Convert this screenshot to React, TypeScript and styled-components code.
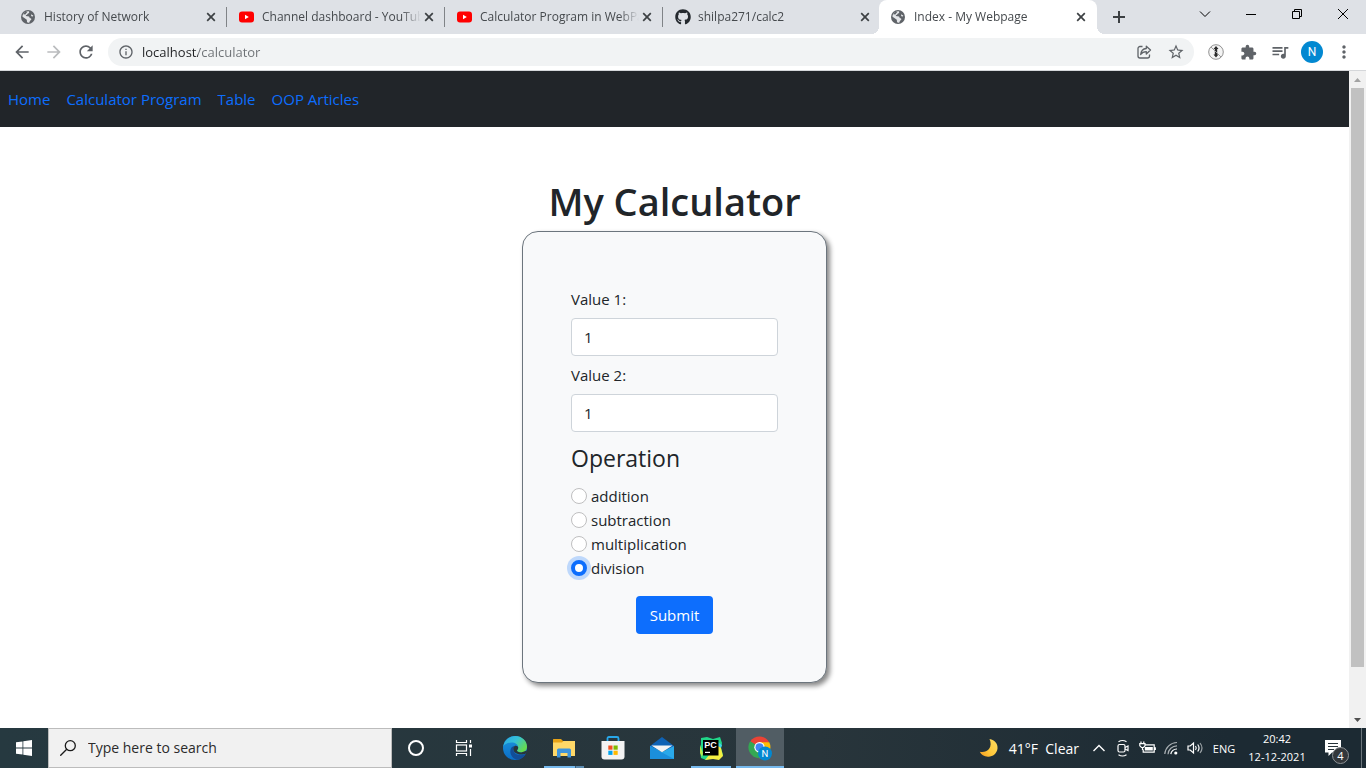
import React from "react";
import styled, { createGlobalStyle, css } from "styled-components";
import {
  MdArrowBack,
  MdArrowForward,
  MdRefresh,
  MdInfoOutline,
  MdStarBorder,
  MdExtension,
  MdQueueMusic,
  MdMoreVert,
} from "react-icons/md";
import { FaGithub } from "react-icons/fa";

const GlobalStyle = createGlobalStyle`
  *, *::before, *::after { box-sizing: border-box; }
  body {
    margin: 0;
    overflow: hidden;
    font-family: "Segoe UI", "Open Sans", "Noto Sans", sans-serif;
    background: #fff;
  }
  button { font: inherit; }
`;

const Desktop = styled.div`
  display: flex;
  flex-direction: column;
  height: 100vh;
`;

/* ---------- browser chrome ---------- */

const TabStrip = styled.header`
  display: flex;
  flex: none;
  height: 34px;
  padding-left: 9px;
  background: #dee1e6;
`;

const Tab = styled.div<{ $active?: boolean; $divider?: boolean }>`
  position: relative;
  display: flex;
  align-items: center;
  flex: 0 1 218px;
  min-width: 0;
  padding: 0 8px 0 12px;
  color: #45494d;
  ${(p) =>
    p.$divider &&
    css`
      &::after {
        content: "";
        position: absolute;
        right: 0;
        top: 7px;
        width: 1px;
        height: 20px;
        background: #808387;
      }
    `}
  ${(p) =>
    p.$active &&
    css`
      margin-left: -2px;
      background: #fff;
      border-radius: 8px 8px 0 0;
      &::before,
      &::after {
        content: "";
        position: absolute;
        bottom: 0;
        width: 8px;
        height: 8px;
      }
      &::before {
        left: -8px;
        background: radial-gradient(circle at 0 0, transparent 8px, #fff 8px);
      }
      &::after {
        right: -8px;
        background: radial-gradient(circle at 100% 0, transparent 8px, #fff 8px);
      }
    `}
`;

const Favicon = styled.span`
  display: flex;
  flex: none;
  width: 16px;
  height: 16px;
  margin-right: 7px;
`;

const TabTitle = styled.span`
  flex: 1;
  min-width: 0;
  overflow: hidden;
  white-space: nowrap;
  font-size: 12px;
  line-height: 16px;
  mask-image: linear-gradient(to right, #000 calc(100% - 20px), transparent);
`;

const PlainButton = styled.button`
  display: flex;
  align-items: center;
  justify-content: center;
  flex: none;
  padding: 0;
  border: 0;
  background: none;
  color: inherit;
`;

const CloseTab = styled(PlainButton)`
  width: 16px;
  height: 16px;
`;

const NewTab = styled(PlainButton)`
  width: 28px;
  margin-left: 8px;
`;

const WindowButtons = styled.div`
  display: flex;
  margin-left: auto;
`;

const WindowButton = styled(PlainButton)`
  width: 46px;
  height: 28px;
  color: #000;
`;

const Toolbar = styled.div`
  display: flex;
  align-items: center;
  flex: none;
  height: 37px;
  padding: 0 6px;
  border-bottom: 1px solid #d5d7da;
  background: #fff;
`;

const ToolButton = styled(PlainButton)<{ $dim?: boolean }>`
  width: 32px;
  height: 28px;
  color: ${(p) => (p.$dim ? "#babcbe" : "#5f6368")};
`;

const AddressBar = styled.div`
  display: flex;
  align-items: center;
  flex: 1;
  height: 28px;
  margin: 0 6px;
  padding: 0 2px 0 10px;
  border-radius: 14px;
  background: #f1f3f4;
  color: #5f6368;
`;

const AddressInput = styled.input`
  flex: 1;
  min-width: 0;
  padding: 0;
  margin-left: 8px;
  border: 0;
  outline: 0;
  font: 13px/20px "Segoe UI", "Open Sans", "Noto Sans", sans-serif;
  color: #5f6368;
  background: linear-gradient(to right, #202124 56px, #6d7175 56px);
  background-clip: text;
  -webkit-text-fill-color: transparent;
`;

const Avatar = styled.span`
  display: flex;
  align-items: center;
  justify-content: center;
  width: 22px;
  height: 22px;
  border-radius: 50%;
  background: #0288d1;
  color: #fff;
  font: 12px/16px Roboto, sans-serif;
`;

/* ---------- web page ---------- */

const Viewport = styled.div`
  display: flex;
  flex: 1;
  min-height: 0;
`;

const Page = styled.div`
  flex: 1;
  min-width: 0;
  overflow: hidden;
  color: #212529;
  font-size: 15px;
  line-height: 24px;
`;

const NavBar = styled.nav`
  display: flex;
  align-items: center;
  gap: 16px;
  height: 56px;
  padding: 0 8px;
  background: #212529;
`;

const NavLink = styled.a`
  color: #0d6efd;
  text-decoration: none;
`;

const Main = styled.main`
  display: flex;
  flex-direction: column;
  align-items: center;
  padding: 48px 16px;
`;

const Title = styled.h1`
  margin: 0;
  padding-top: 2px;
  font-size: 38px;
  font-weight: 600;
  line-height: 48px;
`;

const Card = styled.form`
  display: flex;
  flex-direction: column;
  width: 100%;
  max-width: 305px;
  margin-top: 6px;
  padding: 48px;
  border: 1px solid #6c757d;
  border-radius: 16px;
  background: #f8f9fa;
  box-shadow: 3px 3px 5px #888;
`;

const FieldLabel = styled.label`
  margin: 7px 0;
`;

const TextField = styled.input`
  width: 100%;
  height: 38px;
  padding: 6px 12px;
  border: 1px solid #ced4da;
  border-radius: 4px;
  background: #fff;
  color: #212529;
  font: inherit;
`;

const Operations = styled.fieldset`
  margin: 8px 0 0;
  padding: 0;
  border: 0;
`;

const Legend = styled.legend`
  margin: 0 0 8px;
  padding: 0;
  font-size: 23px;
  line-height: 36px;
`;

const Option = styled.label`
  display: flex;
  align-items: center;
  gap: 4px;
  height: 24px;
`;

const Radio = styled.input`
  appearance: none;
  flex: none;
  width: 16px;
  height: 16px;
  margin: 0;
  border: 1px solid #bfbfc0;
  border-radius: 50%;
  background: #fff;
  outline: 0;
  &:checked {
    border: 4px solid #0d6efd;
    box-shadow: 0 0 0 4px #bed8fb;
  }
`;

const Submit = styled.button`
  align-self: center;
  height: 38px;
  margin-top: 16px;
  padding: 0 14px;
  border: 0;
  border-radius: 4px;
  background: #0d6efd;
  color: #fff;
`;

const ScrollTrack = styled.div`
  display: flex;
  flex-direction: column;
  flex: none;
  width: 17px;
  background: #f1f1f1;
`;

const ScrollArrow = styled(PlainButton)`
  height: 17px;
`;

const ScrollLane = styled.div`
  flex: 1;
  padding: 0 2px;
`;

const ScrollThumb = styled.div`
  height: 93%;
  background: #c1c1c1;
`;

/* ---------- taskbar ---------- */

const Taskbar = styled.footer`
  display: flex;
  flex: none;
  height: 40px;
  background: linear-gradient(to right, #263940, #28353b 60%, #1c2a33 90%);
  color: #fff;
`;

const StartButton = styled(PlainButton)`
  width: 48px;
`;

const SearchBox = styled.label`
  display: flex;
  align-items: center;
  flex: 0 1 344px;
  min-width: 0;
  padding: 0 11px;
  gap: 12px;
  border: 1px solid #bcbcbc;
  background: #f1f1f1;
  color: #1a1a1a;
`;

const SearchInput = styled.input`
  flex: 1;
  min-width: 0;
  padding: 0;
  border: 0;
  outline: 0;
  background: none;
  font: 14px/20px "Segoe UI", "Open Sans", "Noto Sans", sans-serif;
  &::placeholder {
    color: #2b2b2b;
  }
`;

const TaskButton = styled(PlainButton)<{ $open?: boolean; $stacked?: boolean; $current?: boolean }>`
  position: relative;
  width: 48px;
  background: ${(p) => (p.$current ? "#515d64" : "none")};
  ${(p) =>
    (p.$open || p.$current) &&
    css`
      &::after {
        content: "";
        position: absolute;
        bottom: 0;
        left: ${p.$current ? 0 : 4}px;
        right: ${p.$current ? 0 : 4}px;
        height: 2px;
        background: ${p.$stacked
          ? "linear-gradient(to right, #76b9ed 31px, #3f5f76 31px, #3f5f76 32px, #5b8bb0 32px)"
          : "#76b9ed"};
      }
    `}
`;

const Pinned = styled.div`
  display: flex;
  gap: 1px;
  margin-left: 3px;
`;

const Tray = styled.div`
  display: flex;
  margin-left: auto;
`;

const Weather = styled(PlainButton)`
  gap: 10px;
  margin-right: 8px;
  font-size: 14px;
  white-space: pre;
`;

const TrayIcon = styled(PlainButton)`
  width: 24px;
`;

const Language = styled(PlainButton)`
  width: 34px;
  font-size: 11px;
`;

const Clock = styled(PlainButton)`
  flex-direction: column;
  width: 72px;
  font-size: 11px;
  line-height: 18px;
`;

const Notifications = styled(PlainButton)`
  position: relative;
  width: 48px;
  padding-right: 8px;
`;

const Badge = styled.span`
  position: absolute;
  right: 12px;
  bottom: 4px;
  width: 17px;
  height: 17px;
  border: 1px solid #8d9296;
  border-radius: 50%;
  background: #33373b;
  font-size: 11px;
  line-height: 15px;
`;

const ShowDesktop = styled(PlainButton)`
  width: 5px;
  border-left: 1px solid #6b757b;
`;

/* ---------- drawings ---------- */

const Globe = () => (
  <svg width="14" height="16" viewBox="0 0 14 16">
    <circle cx="7" cy="8" r="7" fill="#5f6368" />
    <path
      d="M7.800 2.300c.8 1.200.4 2-.9 2.300-.8 1-1.200 1.500-2.200 1.700.3.900 1 1.100 2.300 1 1.200 0 1.600.8 1.600 1.700 1.200.1 2 .5 1.700 1.600-.4 1-1.500 1-1.900 2.800-.5.300-1.500.3-2 .1-.9-1-.1-2.100-.8-3.100C4.600 9.600 3 9 1.400 7.400 1.700 4.600 4.600 2 7.800 2.300z"
      fill="#e4e6e9"
    />
    <path d="M2.200 5.300C3 3.700 4.500 2.700 6.500 2.500 6 3.800 5 4.300 4.400 5.500z" fill="#5f6368" />
    <path d="M10 5.300c1 .7 1.900.6 2.300 1.500l-.7.800c-1 0-1.800-.9-1.600-2.300z" fill="#e4e6e9" />
  </svg>
);

const YouTube = () => (
  <svg width="16" height="16" viewBox="0 0 16 16">
    <rect x="0" y="2.500" width="15" height="11" rx="3" fill="#f00" />
    <path d="M6 5.800v4.400L9.800 8z" fill="#fff" />
  </svg>
);

const CloseMark = () => (
  <svg width="10" height="10" viewBox="0 0 10 10" stroke="#3c4043" strokeWidth="1.700">
    <path d="M1.200 1.200l7.600 7.600M8.800 1.200L1.200 8.800" />
  </svg>
);

const PlusMark = () => (
  <svg width="12" height="12" viewBox="0 0 12 12" stroke="#3c4043" strokeWidth="2">
    <path d="M6 0v12M0 6h12" />
  </svg>
);

const Share = () => (
  <svg width="16" height="16" viewBox="0 0 16 16" fill="none" stroke="#5f6368" strokeWidth="1.300" strokeLinejoin="round">
    <path d="M6.500 2.500H4A2 2 0 0 0 2 4.500v7.500a2 2 0 0 0 2 2h7.500a2 2 0 0 0 2-2v-1.500" />
    <path d="M10.300 2.200v2.300C7 4.800 5 7 4.700 10.500c1.300-2 3-2.900 5.600-2.900V10L14.500 6z" />
  </svg>
);

const BlockedArrow = () => (
  <svg width="18" height="18" viewBox="0 0 18 18">
    <circle cx="9" cy="9" r="7.300" fill="#f4f4f4" stroke="#929292" />
    <path d="M9 3l2.500 3h-1.300v5.500h1.300L9 14.500l-2.500-3h1.300V6H6.500z" fill="#2a2a2a" />
    <path d="M4 4l10 10" stroke="#9a9a9a" />
  </svg>
);

const WindowsLogo = () => (
  <svg width="16" height="16" viewBox="0 0 16 16" fill="#fff">
    <path d="M0 2.300l6.500-.9v6.100H0zM7.300 1.300L16 0v7.500H7.300zM0 8.400h6.500v6.100L0 13.700zM7.300 8.400H16V16l-8.700-1.300z" />
  </svg>
);

const Magnifier = () => (
  <svg width="16" height="16" viewBox="0 0 16 16" fill="none" stroke="#1a1a1a" strokeWidth="1.300">
    <circle cx="10.300" cy="5.700" r="5" />
    <path d="M6.700 9.300L.3 15.700" />
  </svg>
);

const TaskView = () => (
  <svg width="18" height="16" viewBox="0 0 18 16" fill="none" stroke="#fff" strokeWidth="1.200">
    <path d="M1.500 0v2.500h10V0M1.500 16v-2.500h10V16" />
    <rect x="1.500" y="5" width="10" height="6" />
    <path d="M15.500 0v3M15.500 9v7" />
    <path d="M14 4.500h3v3h-3z" fill="#fff" stroke="none" />
  </svg>
);

const Edge = () => (
  <svg width="24" height="24" viewBox="0 0 24 24">
    <defs>
      <linearGradient id="edgeTop" x1="0" y1="0" x2="1" y2="0.600">
        <stop offset="0" stopColor="#2aa5e4" />
        <stop offset="0.500" stopColor="#35c1d8" />
        <stop offset="1" stopColor="#66dc4e" />
      </linearGradient>
      <linearGradient id="edgeBody" x1="0" y1="0" x2="0" y2="1">
        <stop offset="0" stopColor="#1c96dd" />
        <stop offset="1" stopColor="#0b6dc6" />
      </linearGradient>
    </defs>
    <circle cx="12" cy="12" r="12" fill="url(#edgeBody)" />
    <path d="M.2 10.500C1.400 4 6.500 0 12.300 0 19 0 24 5 24 10.700c0 3.800-2.800 5.800-5.800 5.800-2.600 0-4.200-1-4.200-1.900 0-.7 1.200-1 1.200-3C15.200 8.500 12.300 6.500 8.500 6.500 4.800 6.500 1.500 8.500.2 10.500z" fill="url(#edgeTop)" />
    <path d="M8.500 11.500c-3 4.500 0 11 5.500 12.300C18 23.500 21 21 22.800 18c-5 2.500-11.500.8-12.500-3.800-.3-1.800.4-3 1.500-4-1.400 0-2.500.4-3.300 1.300z" fill="#124d97" />
    <path d="M12 9.800c-2.400 1.700-2.200 5 .3 7 3.500 2.600 8.200 1.800 10.500.6 .5-.2.600 0 .3.600l1-3.500-5.900 2c-2.600 0-4.200-1-4.200-1.900 0-.7 1.200-1 1.200-3 0-1.200-1.500-2.300-3.200-1.800z" fill="#28353b" />
  </svg>
);

const Explorer = () => (
  <svg width="22" height="20" viewBox="0 0 22 20">
    <path d="M0 1.500Q0 1 .6 1H8l2 2H21.400q.6 0 .6.600V18H0z" fill="#e8a317" />
    <path d="M0 4.500h9l1.500-1.500H22V18H0z" fill="#ffd868" />
    <path d="M4 19.500v-7.500q0-1.500 1.500-1.500h11q1.500 0 1.500 1.500v7.500h-3.500V15h-7v4.500z" fill="#3e94dc" />
  </svg>
);

const Store = () => (
  <svg width="24" height="24" viewBox="0 0 24 24">
    <path d="M6.500 6V2.500Q6.500 1 8 1h8q1.500 0 1.500 1.500V6" fill="none" stroke="#28a8ea" strokeWidth="1.800" />
    <path d="M.5 5h23v15.500q0 3-3 3h-17q-3 0-3-3z" fill="#f3f3f3" />
    <path d="M7.300 9.500h4.200v4.200H7.300z" fill="#f25022" />
    <path d="M12.500 9.500h4.200v4.200h-4.200z" fill="#7fba00" />
    <path d="M7.300 14.700h4.200v4.200H7.300z" fill="#00a4ef" />
    <path d="M12.500 14.700h4.200v4.200h-4.200z" fill="#ffb900" />
  </svg>
);

const Mail = () => (
  <svg width="24" height="22" viewBox="0 0 24 22">
    <path d="M0 9L12 0l12 9v4H0z" fill="#0f62b4" />
    <path d="M0 9l12 6 12-6v13H0z" fill="#2aa9ea" />
    <path d="M0 9l24 13H0z" fill="#1b8fdc" />
    <path d="M1.500 8.500h21L12 15.300z" fill="#f4f4f4" />
  </svg>
);

const PyCharm = () => (
  <svg width="24" height="24" viewBox="0 0 24 24">
    <path d="M2 2l6-1 6 2 7-2 2 6-1 5 2 7-4 4-6-1-7 2-5-2-1-8 1-6z" fill="#21d789" />
    <path d="M19 6l4 3-1 3-3 1z" fill="#3ed8e8" />
    <path d="M19 10l3 2 2 8-4 4-6-1-8 1 4-5z" fill="#f4ee42" />
    <path d="M1 9l3 8-1 4-2-4z" fill="#b8e84a" />
    <rect x="4" y="4" width="15.500" height="15.500" fill="#000" />
    <text x="5.200" y="12.300" fill="#fff" fontFamily="Liberation Sans, sans-serif" fontWeight="700" fontSize="9">PC</text>
    <path d="M6 15.800h5v1.200H6z" fill="#fff" />
  </svg>
);

const Chrome = () => (
  <svg width="24" height="26" viewBox="0 0 24 26">
    <path d="M11.500 12.500L2.200 6.500a11 11 0 0 1 18.800.5z" fill="#ea4335" />
    <path d="M2.200 6.200a11 11 0 0 0 8.300 17l4.500-8-3.500-3z" fill="#34a853" />
    <path d="M11.500 7.300h9.800a11 11 0 0 1-10 15.900l4-8.700z" fill="#fbbc05" />
    <circle cx="11.500" cy="12.200" r="5.200" fill="#fff" />
    <circle cx="11.500" cy="12.200" r="4" fill="#4285f4" />
    <circle cx="17" cy="18.500" r="7" fill="#0288d1" />
    <text x="17" y="22" fill="#fff" textAnchor="middle" fontFamily="Roboto, sans-serif" fontSize="9.500">N</text>
  </svg>
);

const Moon = () => (
  <svg width="20" height="20" viewBox="0 0 20 20">
    <defs>
      <linearGradient id="moon" x1="0" y1="1" x2="1" y2="0.300">
        <stop offset="0" stopColor="#f39a1f" />
        <stop offset="0.500" stopColor="#ffc83a" />
        <stop offset="1" stopColor="#ffd95a" />
      </linearGradient>
    </defs>
    <path d="M10.500 1C16 2 19 6 18.500 10.500 18 15.500 13.500 19 9 18.700 5 18.500 2 16.500.8 13.700 4.500 14.300 8 13.500 10 11c2.200-3 2-6.500.5-10z" fill="url(#moon)" />
  </svg>
);

const MeetNow = () => (
  <svg width="12" height="18" viewBox="0 0 12 18" fill="none" stroke="#fff" strokeWidth="1.200">
    <rect x="1" y="5.500" width="7" height="7.500" rx="1.500" />
    <path d="M8 8.500l3-1.500v4.500L8 10M1.500 2.800Q5.500.2 9.500 2.800M1.500 15.700q4 2.600 8 0" />
  </svg>
);

const Battery = () => (
  <svg width="17" height="14" viewBox="0 0 17 14" fill="none" stroke="#fff" strokeWidth="1.200">
    <path d="M6.500 3.800h8.700v7.400H4.200V8.500M2 .5v2M4.800.5v2M.8 2.600h5.200v2.200L4.500 6.500h-2L.8 4.800zM3.500 6.500V9M16.300 6.200v2.800" />
    <path d="M5.800 6h8v3.500h-8z" fill="#fff" stroke="none" />
  </svg>
);

const Wifi = () => (
  <svg width="14" height="14" viewBox="0 0 14 14" fill="none" strokeWidth="1.200">
    <path d="M.8 13A12.500 12.500 0 0 1 13 1.500M4 13.200A9 9 0 0 1 13 4.800" stroke="#aab0b4" />
    <path d="M6.800 13.200A6 6 0 0 1 13 8" stroke="#fff" />
    <circle cx="11.800" cy="12" r="1.600" fill="#fff" />
  </svg>
);

const Volume = () => (
  <svg width="17" height="14" viewBox="0 0 17 14" fill="none" stroke="#fff" strokeWidth="1.200">
    <path d="M1 5v4h2.200L6.500 12V2L3.200 5zM8.500 5q1.500 2 0 4M10.700 3.500q2.700 3.500 0 7" />
    <path d="M13 2q4 5 0 10" stroke="#9aa1a5" />
  </svg>
);

const ActionCenter = () => (
  <svg width="16" height="16" viewBox="0 0 16 16">
    <path d="M0 0h16v12.500H7L3.500 16v-3.500H0z" fill="#fff" />
    <path d="M3 3.500h10M3 6.500h10M3 9.500h6" stroke="#27333a" strokeWidth="1.100" />
  </svg>
);

/* ---------- data ---------- */

const tabs = [
  { title: "History of Network", icon: <Globe />, divider: true },
  { title: "Channel dashboard - YouTub", icon: <YouTube />, divider: true },
  { title: "Calculator Program in WebPa", icon: <YouTube />, divider: true },
  { title: "shilpa271/calc2", icon: <FaGithub size={16} color="#24292e" />, divider: false },
  { title: "Index - My Webpage", icon: <Globe />, active: true },
];

const links = ["Home", "Calculator Program", "Table", "OOP Articles"];
const operations = ["addition", "subtraction", "multiplication", "division"];

export default function App() {
  return (
    <Desktop>
      <GlobalStyle />
      <TabStrip>
        {tabs.map((tab) => (
          <Tab key={tab.title} $active={tab.active} $divider={tab.divider}>
            <Favicon>{tab.icon}</Favicon>
            <TabTitle>{tab.title}</TabTitle>
            <CloseTab aria-label="Close tab">
              <CloseMark />
            </CloseTab>
          </Tab>
        ))}
        <NewTab aria-label="New tab">
          <PlusMark />
        </NewTab>
        <WindowButtons>
          <WindowButton aria-label="Search tabs">
            <svg width="12" height="12" viewBox="0 0 12 12" fill="none" stroke="#000">
              <path d="M1 3.500l5 5 5-5" />
            </svg>
          </WindowButton>
          <WindowButton aria-label="Minimize">
            <svg width="10" height="10" viewBox="0 0 10 10" stroke="#000">
              <path d="M0 5.500h10" />
            </svg>
          </WindowButton>
          <WindowButton aria-label="Restore">
            <svg width="10" height="10" viewBox="0 0 10 10" fill="none" stroke="#000">
              <path d="M.5 2.500h7v7h-7zM2.500 2.500v-2h7v7h-2" />
            </svg>
          </WindowButton>
          <WindowButton aria-label="Close">
            <svg width="10" height="10" viewBox="0 0 10 10" stroke="#000">
              <path d="M0 0l10 10M10 0L0 10" />
            </svg>
          </WindowButton>
        </WindowButtons>
      </TabStrip>

      <Toolbar>
        <ToolButton aria-label="Back"><MdArrowBack size={20} /></ToolButton>
        <ToolButton aria-label="Forward" $dim><MdArrowForward size={20} /></ToolButton>
        <ToolButton aria-label="Reload"><MdRefresh size={20} /></ToolButton>
        <AddressBar>
          <MdInfoOutline size={16} />
          <AddressInput aria-label="Address" defaultValue="localhost/calculator" />
          <ToolButton aria-label="Share"><Share /></ToolButton>
          <ToolButton aria-label="Bookmark"><MdStarBorder size={18} /></ToolButton>
        </AddressBar>
        <ToolButton aria-label="Blocker extension"><BlockedArrow /></ToolButton>
        <ToolButton aria-label="Extensions"><MdExtension size={17} /></ToolButton>
        <ToolButton aria-label="Media"><MdQueueMusic size={20} /></ToolButton>
        <ToolButton aria-label="Profile"><Avatar>N</Avatar></ToolButton>
        <ToolButton aria-label="Menu"><MdMoreVert size={20} /></ToolButton>
      </Toolbar>

      <Viewport>
        <Page>
          <NavBar>
            {links.map((link) => (
              <NavLink key={link} href="#">{link}</NavLink>
            ))}
          </NavBar>
          <Main>
            <Title>My Calculator</Title>
            <Card onSubmit={(e) => e.preventDefault()}>
              <FieldLabel htmlFor="value1">Value 1:</FieldLabel>
              <TextField id="value1" defaultValue="1" />
              <FieldLabel htmlFor="value2">Value 2:</FieldLabel>
              <TextField id="value2" defaultValue="1" />
              <Operations>
                <Legend>Operation</Legend>
                {operations.map((name) => (
                  <Option key={name}>
                    <Radio type="radio" name="operation" value={name} defaultChecked={name === "division"} />
                    {name}
                  </Option>
                ))}
              </Operations>
              <Submit type="submit">Submit</Submit>
            </Card>
          </Main>
        </Page>
        <ScrollTrack>
          <ScrollArrow aria-label="Scroll up">
            <svg width="7" height="4" viewBox="0 0 7 4"><path d="M0 4L3.500 0 7 4z" fill="#a3a3a3" /></svg>
          </ScrollArrow>
          <ScrollLane><ScrollThumb /></ScrollLane>
          <ScrollArrow aria-label="Scroll down">
            <svg width="7" height="4" viewBox="0 0 7 4"><path d="M0 0h7L3.500 4z" fill="#505050" /></svg>
          </ScrollArrow>
        </ScrollTrack>
      </Viewport>

      <Taskbar>
        <StartButton aria-label="Start"><WindowsLogo /></StartButton>
        <SearchBox>
          <Magnifier />
          <SearchInput aria-label="Search" placeholder="Type here to search" />
        </SearchBox>
        <TaskButton aria-label="Cortana">
          <svg width="18" height="18" viewBox="0 0 18 18" fill="none" stroke="#fff" strokeWidth="2">
            <circle cx="9" cy="9" r="7" />
          </svg>
        </TaskButton>
        <TaskButton aria-label="Task view"><TaskView /></TaskButton>
        <Pinned>
          <TaskButton aria-label="Edge"><Edge /></TaskButton>
          <TaskButton aria-label="File Explorer" $open $stacked><Explorer /></TaskButton>
          <TaskButton aria-label="Store"><Store /></TaskButton>
          <TaskButton aria-label="Mail"><Mail /></TaskButton>
          <TaskButton aria-label="PyCharm" $open><PyCharm /></TaskButton>
          <TaskButton aria-label="Chrome" $current><Chrome /></TaskButton>
        </Pinned>
        <Tray>
          <Weather>
            <Moon />
            {"41°F  Clear"}
          </Weather>
          <TrayIcon aria-label="Hidden icons">
            <svg width="12" height="8" viewBox="0 0 12 8" fill="none" stroke="#fff" strokeWidth="1.400">
              <path d="M.5 7L6 1.500 11.500 7" />
            </svg>
          </TrayIcon>
          <TrayIcon aria-label="Meet now"><MeetNow /></TrayIcon>
          <TrayIcon aria-label="Battery"><Battery /></TrayIcon>
          <TrayIcon aria-label="Network"><Wifi /></TrayIcon>
          <TrayIcon aria-label="Volume"><Volume /></TrayIcon>
          <Language>ENG</Language>
          <Clock>
            <span>20:42</span>
            <span>12-12-2021</span>
          </Clock>
          <Notifications aria-label="Notifications">
            <ActionCenter />
            <Badge>4</Badge>
          </Notifications>
          <ShowDesktop aria-label="Show desktop" />
        </Tray>
      </Taskbar>
    </Desktop>
  );
}
